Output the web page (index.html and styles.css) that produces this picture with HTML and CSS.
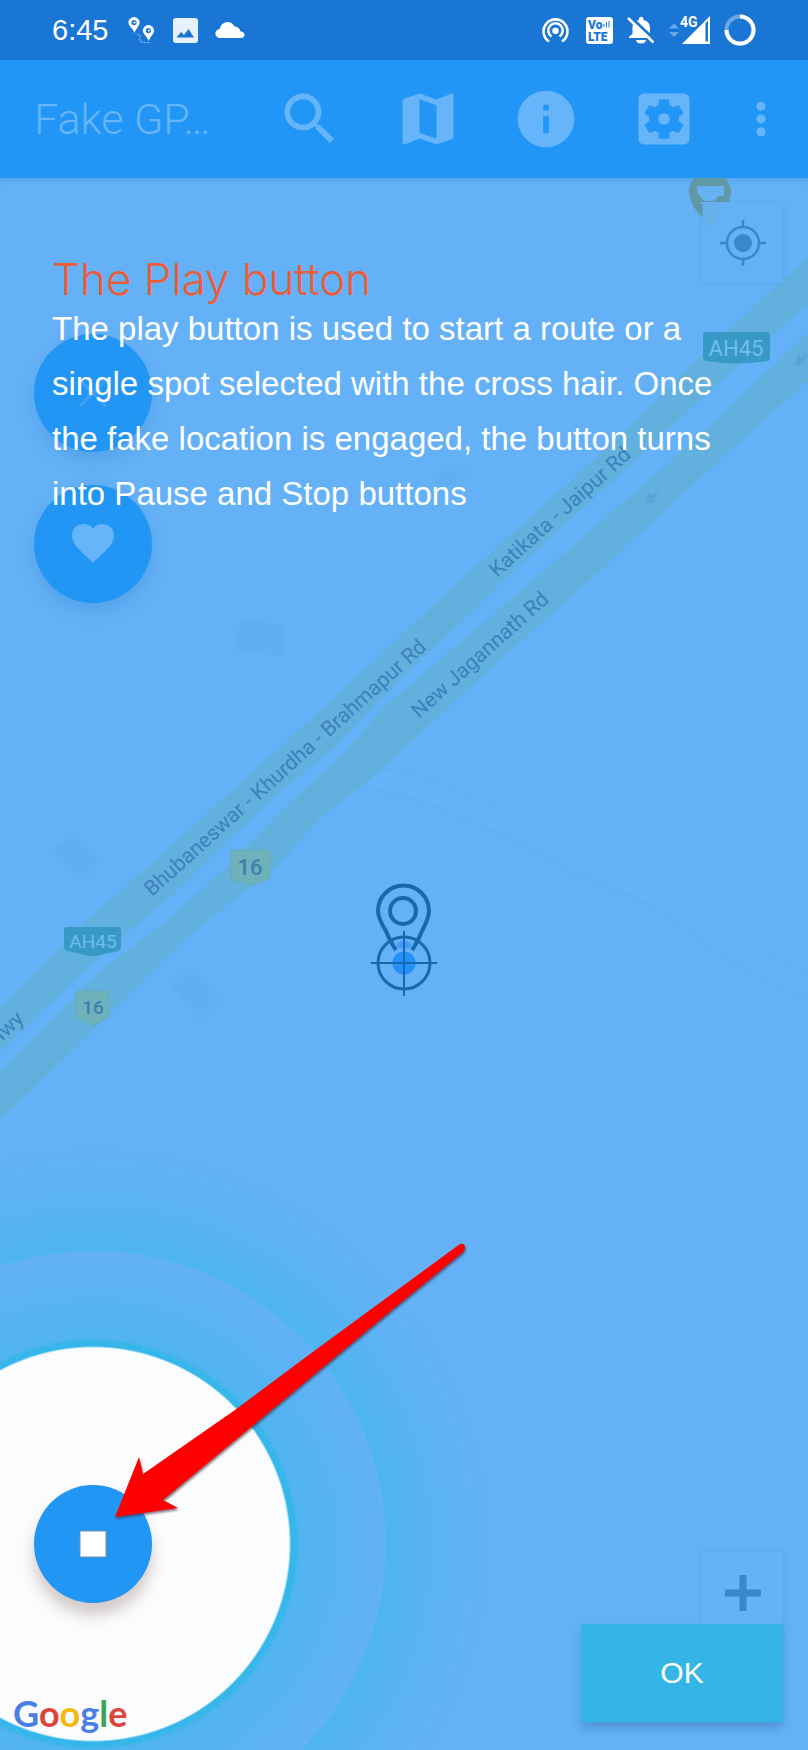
FILE: index.html
```html
<!DOCTYPE html>
<html lang="en">
<head>
<meta charset="utf-8">
<meta name="viewport" content="width=device-width, initial-scale=1">
<title>Fake GPS</title>
<link rel="stylesheet" href="styles.css">
</head>
<body>
<div class="screen">
  <header class="status">
    <time class="clock">6:45</time>
    <svg class="route-icon" viewBox="0 0 26 28" width="26" height="28" fill="#fff">
      <path fill-rule="evenodd" d="M6 1a5.600 5.600 0 0 1 5.600 5.600C11.600 10 8 12.500 6.500 17 5 12.500.4 10 .4 6.600A5.600 5.600 0 0 1 6 1zm0 3a2.600 2.600 0 1 0 0 5.200A2.600 2.600 0 0 0 6 4z"/>
      <path fill-rule="evenodd" d="M20.400 9a5.600 5.600 0 0 1 5.600 5.600c0 3.400-3.800 6-5.300 10.400-1.500-4.400-5.900-7-5.900-10.400A5.600 5.600 0 0 1 20.400 9zm0 3a2.600 2.600 0 1 0 0 5.200 2.600 2.600 0 0 0 0-5.200z"/>
      <circle cx="6.500" cy="6.600" r="1"/><circle cx="20.800" cy="14.600" r="1"/>
      <path d="M9 18.500q4 0 3 3.500t3 4.500h7" fill="none" stroke="#8fc0f3" stroke-width="1.200" stroke-dasharray="2 1"/>
    </svg>
    <svg class="picture-icon" viewBox="0 0 25 25" width="25" height="25"><rect width="25" height="25" rx="3" fill="#e8f1fb"/><path d="M3.500 19.500 8 14l3 3 4.500-6 5.500 8.500z" fill="#1976d4"/></svg>
    <svg class="cloud-icon" viewBox="0 0 30 18" width="30" height="18"><path fill="#fff" d="M5 17a4.500 4.500 0 0 1-.3-9A8 8 0 0 1 12 1c4 0 6 2 7.500 4.500C23 5.500 25 8 25.300 10.300 28 10.500 29.500 12 29.500 14S28 17 26 17z"/></svg>
    <div class="status-right">
      <svg class="hotspot" viewBox="0 0 27 27" width="27" height="27" fill="none" stroke="#fff" stroke-width="2.600"><path d="M7 24.500a12 12 0 1 1 13 0"/><path d="M9.500 19.500a7.200 7.200 0 1 1 8 0"/><circle cx="13.500" cy="13.800" r="3.200" fill="#fff" stroke="none"/></svg>
      <svg viewBox="0 0 27 27" width="27" height="27"><rect width="27" height="27" rx="3" fill="#fff"/><text class="volte" x="2" y="12">Vo</text><text class="volte" x="2" y="24">LTE</text><path d="M18 10V7M20.500 10.500V5M23 10.500V4" stroke="#1976d4" fill="none"/></svg>
      <svg viewBox="0 0 28 28" width="28" height="28"><path fill="#fff" d="M2 22v-1.500L5.500 18v-6c0-4 2-7 6.500-8V3a2.200 2.200 0 0 1 4.400 0v1c4.600 1 6.600 4 6.600 8v6l3.500 2.500V22zM9 24h10q-.5 3.500-5 3.500T9 24z"/><path d="M3 .5 29 25" stroke="#1976d4" stroke-width="3"/><path d="M1 2 26.500 26.500" stroke="#fff" stroke-width="2.600"/></svg>
      <svg viewBox="0 0 41 30" width="41" height="30"><path fill="#6ba8e6" d="M0 13.500 5 8.500l5 5zM0 17h10l-5 5z"/><path fill="#fff" fill-rule="evenodd" d="M13 29 41 1v28zM36.500 8v18.500H39V5.500z"/><path d="M10 0h18v12H10z" fill="#1976d4"/><text class="net" x="11" y="12">4G</text></svg>
      <svg viewBox="0 0 32 32" width="32" height="32" fill="none" stroke-width="4"><circle cx="16" cy="16" r="13.500" stroke="#6ba8e6"/><path d="M16 2.500A13.500 13.500 0 1 1 2.500 16" stroke="#fff"/></svg>
    </div>
  </header>

  <nav class="toolbar">
    <h1 class="app-title">Fake GP…</h1>
    <button class="tool" aria-label="Search"><svg viewBox="0 0 24 24"><path d="M15.500 14h-.79l-.28-.27A6.471 6.471 0 0 0 16 9.500 6.500 6.500 0 1 0 9.500 16c1.610 0 3.090-.59 4.230-1.570l.27.28v.79l5 4.990L20.490 19l-4.990-5zm-6 0C7.010 14 5 11.990 5 9.500S7.010 5 9.500 5 14 7.010 14 9.500 11.990 14 9.500 14z"/></svg></button>
    <button class="tool" aria-label="Map"><svg viewBox="0 0 24 24"><path d="M20.500 3l-.16.03L15 5.100 9 3 3.360 4.900c-.21.07-.36.25-.36.48V20.500c0 .28.22.5.5.5l.16-.03L9 18.900l6 2.100 5.640-1.900c.21-.07.36-.25.36-.48V3.500c0-.28-.22-.5-.5-.5zM15 19l-6-2.110V5l6 2.110V19z"/></svg></button>
    <button class="tool" aria-label="Info"><svg viewBox="0 0 24 24"><path d="M12 2C6.480 2 2 6.480 2 12s4.480 10 10 10 10-4.480 10-10S17.520 2 12 2zm1 15h-2v-6h2v6zm0-8h-2V7h2v2z"/></svg></button>
    <button class="tool" aria-label="Settings"><svg viewBox="0 0 24 24"><path d="M12 10c-1.100 0-2 .9-2 2s.9 2 2 2 2-.9 2-2-.9-2-2-2zm7-7H5c-1.110 0-2 .9-2 2v14c0 1.100.89 2 2 2h14c1.110 0 2-.9 2-2V5c0-1.100-.89-2-2-2zm-1.750 9c0 .23-.02.46-.05.68l1.480 1.160c.13.11.17.3.08.45l-1.400 2.420c-.09.15-.27.21-.43.15l-1.740-.7c-.36.28-.76.51-1.180.69l-.26 1.850c-.03.17-.18.3-.35.3h-2.800c-.17 0-.32-.13-.35-.29l-.26-1.850c-.43-.18-.82-.41-1.180-.69l-1.740.7c-.16.06-.34 0-.43-.15l-1.400-2.420c-.09-.15-.05-.34.08-.45l1.480-1.160c-.03-.23-.05-.46-.05-.69 0-.23.02-.46.05-.68l-1.480-1.160c-.13-.11-.17-.3-.08-.45l1.400-2.420c.09-.15.27-.21.43-.15l1.740.7c.36-.28.76-.51 1.180-.69l.26-1.850c.03-.17.18-.3.35-.3h2.800c.17 0 .32.13.35.29l.26 1.850c.43.18.82.41 1.180.69l1.740-.7c.16-.06.34 0 .43.15l1.400 2.420c.09.15.05.34-.08.45l-1.480 1.160c.03.23.05.46.05.69z"/></svg></button>
    <button class="tool tool-more" aria-label="More options"><svg viewBox="0 0 24 24"><circle cx="12" cy="7.500" r="1.600"/><circle cx="12" cy="12" r="1.600"/><circle cx="12" cy="16.500" r="1.600"/></svg></button>
  </nav>

  <main class="map">
    <svg class="map-canvas" viewBox="0 178 808 1572" preserveAspectRatio="xMinYMin slice">
      <g class="building">
        <path d="M240 618 286 626 281 657 236 650zM72 834 100 862 83 882 53 850zM190 967 220 1000 200 1020 170 985zM455 462 468 472 445 490 432 482z"/>
      </g>
      <path class="lane-fill" d="M340 774 383 778Q440 795 480 813L540 834 593 865 650 892Q680 906 707 930L747 955 808 989"/>
      <g class="lane">
        <path d="M340 766 383 768Q440 782 480 802L540 827 593 857 650 883Q680 900 707 923L747 945 808 977"/>
        <path d="M340 782 365 787 440 807 483 827 520 843 573 873 640 900Q668 914 680 923L723 957 808 1000"/>
      </g>
      <g class="road">
        <path d="M-2 1010 88 920 160 857 238 786 333 700 440 600 464 578 617 440 697 360 810 256V301L704 395 591 500 514 570 418 662 333 748 277 793 173 893 93 961-2 1053z"/>
        <path d="M-2 1074 100 972 163 925 233 862 287 807 340 757 390 703 537 578 704 433 810 331V378L697 480 591 578 547 617 457 698 377 773 320 817 277 865 190 934 123 1000-2 1122z"/>
      </g>
      <g class="road-arrow"><path d="m646 504 3-13 3 4 7-5-6 10 4 2zM795 366l3-13 3 4 8-5-6 10 3 2z"/></g>
      <g class="road-name">
        <text transform="translate(152 897) rotate(-42)">Bhubaneswar - Khurdha - Brahmapur Rd</text>
        <text transform="translate(497 578) rotate(-42)">Katikata - Jaipur Rd</text>
        <text transform="translate(419 719) rotate(-42)">New Jagannath Rd</text>
        <text transform="translate(25 1020) rotate(-44)" text-anchor="end">Hwy</text>
      </g>
      <g class="shield-ah">
        <path d="M706 332h61q3 0 3 3v22q0 3-3 4-30 5-61 0-3-1-3-4v-22q0-3 3-3z"/>
        <text x="736" y="356" font-size="22">AH45</text>
        <path d="M67 927h51q3 0 3 3v17q0 3-3 4l-18 4q-7 2-14 0l-19-4q-3-1-3-4v-17q0-3 3-3z"/>
        <text x="93" y="948" font-size="19">AH45</text>
      </g>
      <g class="shield-nh">
        <path d="M234 850h33q3 0 3 3v23q0 3-3 4l-16 5-17-5q-3-1-3-4v-23q0-3 3-3z"/>
        <text x="250" y="875" font-size="22">16</text>
        <path d="M79 991h27q3 0 3 3v21q0 3-3 4l-13 6-14-6q-3-1-3-4v-21q0-3 3-3z"/>
        <text x="93" y="1014" font-size="19">16</text>
      </g>
      <path d="M703 215 710 232 722 208V202H703z" fill="#67b1e2"/>
      <path d="M703 218V202H729L731 193A21 21 0 0 0 724 177H695A21 21 0 0 0 689 193Q690 206 703 218z" fill="#6098a6"/>
      <path d="M698 187h25v8h-6q-1 5-5 5h-7q-7-5-7-13zm2 16h25" fill="#67b3f2" stroke="#67b3f2" stroke-width="2"/>
      <g class="target">
        <path d="M396 950Q391 943 386 931 378 918 378 911A25.500 25.500 0 0 1 429 911Q429 918 422 931 417 943 412 950" stroke-width="4"/>
        <circle cx="403" cy="911" r="13" stroke-width="4"/>
        <path d="M396 946Q404 935 412 946 404 951 396 946z" fill="#3e9cf8" stroke="none"/>
        <circle cx="404" cy="963" r="11.500" fill="#2490fa" stroke="none"/>
        <circle cx="404" cy="963" r="26" stroke-width="3"/>
        <path d="M371 963H437M404 931V996" stroke-width="2"/>
      </g>
    </svg>

    <div class="side-actions">
      <button class="fab fab-faded" aria-label="Close"><svg viewBox="0 0 28 28" width="28" height="28"><path d="M1 1 27 27M27 1 1 27" fill="none" stroke="#3fa1f5" stroke-width="3"/></svg></button>
      <button class="fab fab-faded" aria-label="Favourites"><svg viewBox="2 3 20 19" width="42" height="40"><path d="M12 21.350l-1.450-1.320C5.400 15.360 2 12.280 2 8.500 2 5.420 4.420 3 7.500 3c1.740 0 3.410.81 4.500 2.090C13.090 3.810 14.760 3 16.500 3 19.580 3 22 5.420 22 8.500c0 3.780-3.400 6.860-8.550 11.540L12 21.350z" fill="#66b5fa"/></svg></button>
    </div>

    <button class="map-button locate" aria-label="My location"><svg viewBox="0 0 46 46" width="46" height="46"><circle cx="23" cy="23" r="9" fill="#3a88ca"/><path d="M39 23A16 16 0 1 1 7 23a16 16 0 0 1 32 0zM23 0v7M23 39v7M0 23h7M39 23h7" fill="none" stroke="#3a88ca" stroke-width="2.500"/></svg></button>
    <button class="map-button zoom-in" aria-label="Zoom in"><svg viewBox="0 0 36 36" width="36" height="36"><path d="M18 0v36M0 18h36" stroke="#3a88ca" stroke-width="7"/></svg></button>

    <div class="spotlight">
      <button class="fab" aria-label="Stop"><svg viewBox="0 0 28 28" width="28" height="28"><rect x="1" y="1" width="26" height="26" fill="#fff" stroke="#6d93b5"/></svg></button>
    </div>

    <section class="coach">
      <h2 class="coach-title">The Play button</h2>
      <p class="coach-text">The play button is used to start a route or a single spot selected with the cross hair. Once the fake location is engaged, the button turns into Pause and Stop buttons</p>
    </section>

    <div class="brand"><span class="g-blue">G</span><span class="g-red">o</span><span class="g-yellow">o</span><span class="g-blue">g</span><span class="g-green">l</span><span class="g-red">e</span></div>

    <svg class="pointer" viewBox="105 1234 370 300" width="370" height="300"><path d="M115 1517 139 1457 143 1474 235 1410 310 1354 460 1244Q465 1243 465 1248L463 1252 393 1309 310 1378 250 1428 163 1500 178 1508z" fill="#f00"/></svg>

    <button class="ok">OK</button>
  </main>
</div>
</body>
</html>
```

FILE: styles.css
```css
* { box-sizing: border-box; }
body {
  margin: 0;
  background: #64b1f7;
  font-family: "Liberation Sans", Arial, sans-serif;
}
button {
  border: 0;
  padding: 0;
  font: inherit;
  background: none;
  display: flex;
  align-items: center;
  justify-content: center;
}
.screen {
  min-height: 100vh;
  display: flex;
  flex-direction: column;
}

.status {
  height: 60px;
  padding: 0 52px;
  display: flex;
  align-items: center;
  background: #1976d4;
  color: #fff;
}
.clock { font-size: 29px; }
.route-icon { margin-left: 20px; }
.picture-icon { margin-left: 19px; }
.cloud-icon { margin-left: 17px; }
.status-right {
  margin-left: auto;
  display: flex;
  align-items: center;
  gap: 14px;
}
.status-right svg { overflow: visible; }
.hotspot { margin-right: 3px; }
.volte { font: 900 12px Roboto, sans-serif; fill: #1976d4; }
.net { font: 700 14px Roboto, sans-serif; fill: #fff; }

.toolbar {
  height: 118px;
  padding: 0 9px 0 34px;
  display: flex;
  background: #2196f6;
}
.app-title {
  flex: 1;
  margin: 0;
  font: 300 43px/118px Roboto, sans-serif;
  color: #66b5fa;
  white-space: nowrap;
}
.tool { width: 118px; }
.tool-more { width: 76px; }
.tool svg { width: 68px; height: 68px; fill: #66b5fa; }

.map {
  position: relative;
  flex: 1;
  overflow: hidden;
  background: #64b1f7;
  box-shadow: inset 0 6px 4px -3px #5aa6ea;
}
.map-canvas {
  position: absolute;
  inset: 0;
  width: 100%;
  height: 100%;
}
.building { fill: #61aef4; }
.lane { fill: none; stroke: #61adf2; stroke-width: 1; }
.lane-fill { fill: none; stroke: #65b2f8; stroke-width: 20; }
.road { fill: #62b0dd; stroke: #61b2cf; stroke-width: 1; }
.road-arrow { fill: #58a6d2; }
.road-name { font: 400 21px Roboto, sans-serif; fill: #3e80bd; }
.shield-ah path { fill: #3799c5; }
.shield-ah text { font-family: Roboto, sans-serif; fill: #74bcee; text-anchor: middle; }
.shield-nh path { fill: #6fb1bb; stroke: #64aab5; }
.shield-nh text { font-family: Roboto, sans-serif; font-weight: 500; fill: #3d80b0; text-anchor: middle; }
.target { fill: none; stroke: #1769ae; }

.side-actions {
  position: absolute;
  top: 156px;
  left: 34px;
  display: grid;
  gap: 33px;
}
.fab {
  position: relative;
  width: 118px;
  height: 118px;
  border-radius: 50%;
  background: #2196f5;
  box-shadow: 0 12px 14px rgba(120, 90, 80, .3);
}
.fab-faded { box-shadow: 0 8px 16px rgba(40, 120, 200, .25); }

.map-button {
  position: absolute;
  right: 25px;
  width: 81px;
  height: 81px;
  background: rgba(100, 178, 248, .35);
  box-shadow: 0 1px 5px rgba(50, 120, 190, .2);
}
.locate { top: 24px; }
.zoom-in { bottom: 117px; background: #64b2f8; }

.spotlight {
  position: absolute;
  left: 34px;
  bottom: 147px;
}
.spotlight::before {
  content: "";
  position: absolute;
  inset: -351px;
  border-radius: 50%;
  background: radial-gradient(circle closest-side,
    #fbfcfe 196px, #35b6ea 198px, #37b6ea 203px, #51b4f1 206px,
    #57b3f3 240px, #63b1f7 292px, #4db5ef 294px, #56b3f2 325px, #60b2f6 370px, #64b1f7 410px);
}

.coach {
  position: relative;
  padding: 79px 88px 0 52px;
}
.coach-title {
  margin: 0;
  font: 300 44px/44px Inter, sans-serif;
  color: #ee5b35;
}
.coach-text {
  margin: 0;
  font-size: 33px;
  line-height: 55px;
  color: #fff;
}

.brand {
  position: absolute;
  left: 13px;
  bottom: 14px;
  font: 700 36px/46px Lato, sans-serif;
}
.g-blue { color: #4a80e4; }
.g-red { color: #dc4537; }
.g-yellow { color: #f2b90f; }
.g-green { color: #3da457; }

.pointer {
  position: absolute;
  left: 105px;
  bottom: 216px;
  filter: drop-shadow(1px 2px 1px rgba(60, 40, 60, .6));
}
.ok {
  position: absolute;
  right: 25px;
  bottom: 28px;
  width: 202px;
  height: 98px;
  background: #35b4e6;
  box-shadow: 0 6px 8px rgba(50, 110, 170, .4);
  color: #fff;
  font-size: 30px;
}
```
